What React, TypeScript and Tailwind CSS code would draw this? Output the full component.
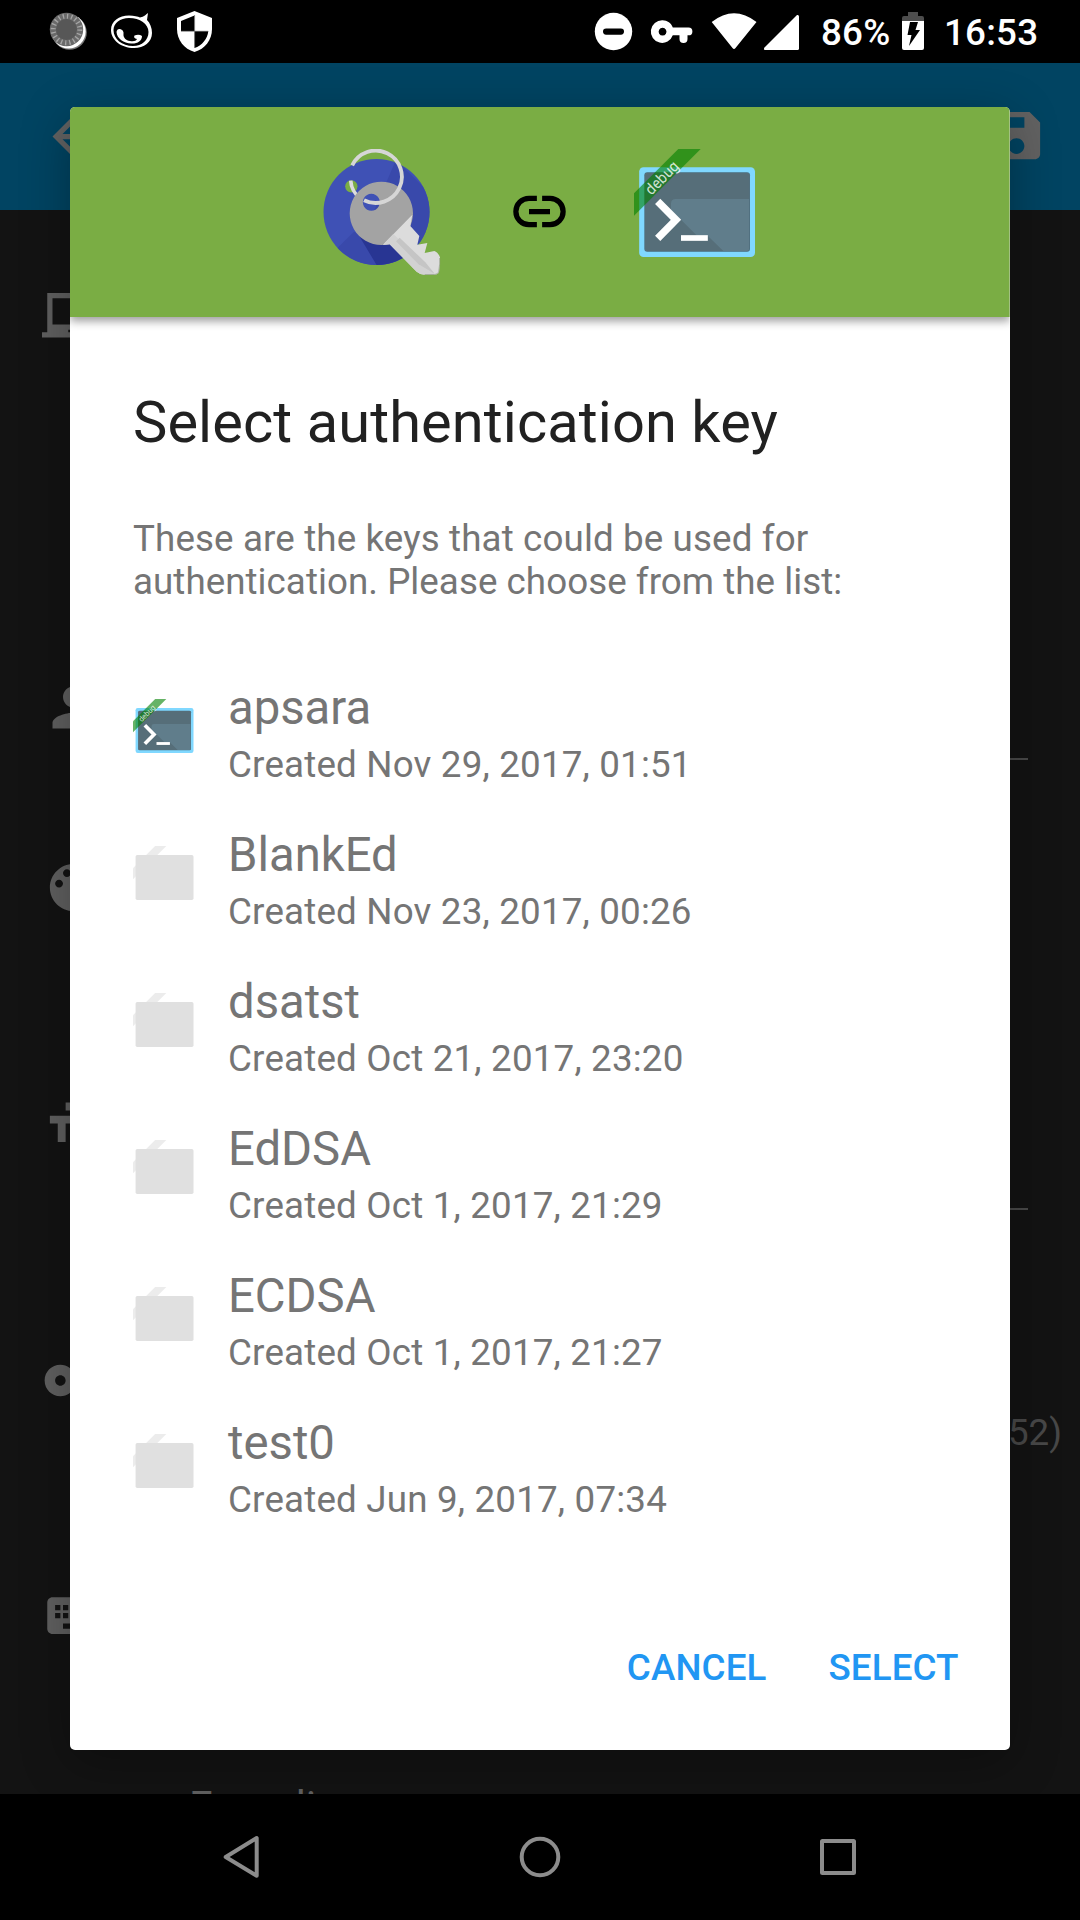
import React from "react";

type Entry = { name: string; created: string; active?: boolean };

const entries: Entry[] = [
  { name: "apsara", created: "Created Nov 29, 2017, 01:51", active: true },
  { name: "BlankEd", created: "Created Nov 23, 2017, 00:26" },
  { name: "dsatst", created: "Created Oct 21, 2017, 23:20" },
  { name: "EdDSA", created: "Created Oct 1, 2017, 21:29" },
  { name: "ECDSA", created: "Created Oct 1, 2017, 21:27" },
  { name: "test0", created: "Created Jun 9, 2017, 07:34" },
];

function Glyph({ d, className = "" }: { d: string; className?: string }) {
  return (
    <svg viewBox="0 0 24 24" className={`block h-[63px] w-[63px] shrink-0 fill-current ${className}`}>
      <path d={d} fillRule="evenodd" />
    </svg>
  );
}

function TerminalIcon({ className = "" }: { className?: string }) {
  return (
    <svg viewBox="102 57 378 378" className={`block shrink-0 ${className}`}>
      <rect x="117.500" y="111.500" width="347.500" height="269.500" rx="13" fill="#80d8ff" />
      <rect x="133" y="127" width="317" height="238" rx="9" fill="#4a6b7c" />
      <rect x="135" y="129" width="313" height="234" rx="7" fill="#607d8b" />
      <path d="M142 129H441Q448 129 448 136V207H227Q213 207 213 221V240L243 269L291 317H323L370 363H142Q135 363 135 356V136Q135 129 142 129Z" fill="#566e79" />
      <path d="M173 214L228 269.500L173 325" fill="none" stroke="#fff" strokeWidth="22" />
      <rect x="243" y="315.500" width="80.500" height="17" fill="#fff" />
      <path d="M235 57H302L102 257V190Z" fill="#008000" fillOpacity=".6" />
      <text
        x="0"
        y="0"
        transform="translate(154 197) rotate(-45)"
        fontFamily="Roboto, sans-serif"
        fontSize="46"
        textLength="121"
        lengthAdjust="spacingAndGlyphs"
        fill="#fff"
        fillOpacity=".8"
      >
        debug
      </text>
    </svg>
  );
}

function BlankIcon({ className = "" }: { className?: string }) {
  return (
    <svg viewBox="102 57 378 378" className={`block shrink-0 ${className}`}>
      <path d="M235 57H302L102 257V190Z" fill="#ececec" />
      <rect x="117.500" y="111.500" width="347.500" height="269.500" rx="10" fill="#e0e0e0" />
    </svg>
  );
}

function KeychainIcon() {
  return (
    <svg viewBox="60 57 378 378" className="block h-[126px] w-[126px] shrink-0">
      <defs>
        <clipPath id="disc">
          <circle cx="229.500" cy="246" r="159" />
        </clipPath>
      </defs>
      <g clipPath="url(#disc)">
        <rect x="60" y="80" width="340" height="340" fill="#3f51b5" />
        <path d="M288 90L400 200V420H230L186 330L240 200Z" fill="#3949ab" />
        <path d="M110 356L162 305L240 340V420H150Z" fill="#3949ab" />
        <path d="M180 322L231 407L330 400L270 320Z" fill="#283593" />
      </g>
      <circle cx="154" cy="169" r="18.500" fill="#7aad44" />
      <path d="M152 152C154 180 166 193 180 205" fill="none" stroke="#dcdcdc" strokeWidth="11" />
      <path fillRule="evenodd" d="M244 155a95 95 0 1 0 .1 0ZM214 191.500a25.500 25.500 0 1 1-.1 0Z" fill="#a3a3a3" />
      <path d="M337 254L331 288L358 318L352 344L382 339L374 369L403 363Q414 366 420 382V402L417 426Q414 434 404 434H374Q360 434 350 425L269 343L249 344Z" fill="#dcdcdc" />
      <path d="M280 312L404 431Q412 434 374 434Q360 434 350 425L269 343L249 344Z" fill="#d2d2d2" />
      <path d="M288 334L299 323L376 397L404 431L356 403Z" fill="#c5c5c5" />
      <path d="M419 384V402L416 426Q413 433 404 433.500H374" fill="none" stroke="#8e9b80" strokeWidth="2" />
      <path d="M156.500 106A78.500 78.500 0 1 1 192 210.500" fill="none" stroke="#d6d6d6" strokeWidth="11.500" />
    </svg>
  );
}

function StatusBar() {
  return (
    <div className="flex h-[63px] bg-black text-white">
      <svg viewBox="0 0 240 63" className="h-[63px] w-[240px] shrink-0">
        <circle cx="69.500" cy="32.500" r="17.300" fill="#777" />
        <circle cx="68.700" cy="31.500" r="17" fill="#fff" />
        <circle cx="66.500" cy="29.500" r="16.700" fill="#6a6a6a" />
        <circle cx="66.500" cy="29.500" r="13.300" fill="none" stroke="#a5a5a5" strokeWidth="5" strokeDasharray="1.300 2.880" />
        <circle cx="66.500" cy="29.500" r="10.500" fill="#575757" />
        <path
          fillRule="evenodd"
          d="M129 15.500C134 15.500 138 16.500 140 17.500C144 17 146.500 14 148 13L147 20C150 23 152 28 152 33C152 42 144 48 134 48C121 48 111 40 111 30C111 21 119 15.500 129 15.500ZM129 18C120 18 113.500 23 113.500 30C113.500 39 122 46 133 46C142 46 148.500 40 148.500 32C148.500 24 140 18 129 18Z"
          fill="#fff"
        />
        <path d="M116.500 32Q117 28.500 120 29Q124 30 123.500 34C123 37.500 126 40.500 130 41C134 41.500 136 41 137 39Q133 38 134.500 35.500Q139 34 142 36C142 41 137 44 131 43.500C124 43 117 39 116.500 32Z" fill="#fff" />
        <path d="M194.500 11L212 18V29C212 40 205 49 194.500 52C184 49 177 40 177 29V18Z" fill="#fff" />
        <path d="M194.500 15.500V31H181V21ZM194.500 31H208.300C207.500 39 202 45.500 194.500 48Z" fill="#000" />
        <path d="M181 31.300H208M194.600 15V48" stroke="#777" strokeWidth=".8" />
      </svg>
      <svg viewBox="590 0 220 63" className="ml-[350px] h-[63px] w-[220px] shrink-0">
        <circle cx="613.500" cy="31.500" r="18.700" fill="#fff" />
        <rect x="603" y="28.500" width="21" height="6.200" rx="3.100" fill="#000" />
        <path
          fillRule="evenodd"
          d="M662.500 20.300C667.300 20.300 671.300 23.300 672.800 27.500H688.500A3.900 3.900 0 0 1 688.500 35.300H687.500V39A3.800 3.800 0 0 1 679.500 39V35.300H672.800A11.300 11.300 0 1 1 662.500 20.300ZM662.500 27.800A3.900 3.900 0 1 0 662.600 27.800Z"
          fill="#fff"
        />
        <path d="M711.700 22Q734 4.500 756.500 22L735.500 48Q734 50 732.500 48Z" fill="#fff" />
        <path d="M797 15Q799 14.500 799 16.500V48.500Q799 50 797.500 50H765Q763 49.500 764.500 47.500Z" fill="#fff" />
      </svg>
      <span className="ml-[11px] w-[70px] whitespace-nowrap pt-[5px] font-['Roboto',sans-serif] text-[36.75px] font-medium leading-[55px] tracking-[0.2px]">86%</span>
      <svg viewBox="902 0 22 63" className="ml-[11px] h-[63px] w-[22px] shrink-0">
        <path d="M908 12H918V16H922Q924 16 924 18V21H902V18Q902 16 904 16H908Z" fill="#4d4d4d" />
        <path d="M902 21H924V48Q924 50 922 50H904Q902 50 902 48Z" fill="#fff" />
        <path d="M910 22H918L915.500 30H920L909 46L911.500 35H907.500Z" fill="#000" />
      </svg>
      <span className="ml-[20px] whitespace-nowrap pt-[5px] font-['Roboto',sans-serif] text-[36.75px] font-medium leading-[55px] tracking-[0.2px]">16:53</span>
    </div>
  );
}

function EditorScreen() {
  return (
    <>
      <div className="flex h-[147px] items-start justify-between bg-[#014462] pl-[42px] pr-[32px] pt-[41px] text-[#626262]">
        <Glyph className="mt-[1px]" d="M20 11H7.830l5.590-5.590L12 4l-8 8 8 8 1.410-1.410L7.830 13H20v-2z" />
        <Glyph d="M17 3H5c-1.110 0-2 .9-2 2v14c0 1.100.89 2 2 2h14c1.100 0 2-.9 2-2V7l-4-4zm-5 16c-1.660 0-3-1.340-3-3s1.340-3 3-3 3 1.340 3 3-1.340 3-3 3zm3-10H5V5h10v4z" />
      </div>
      <div className="flex h-[1584px] overflow-hidden bg-[#131313] pl-[42px] text-[#606060]">
        <div className="w-[63px] shrink-0 pt-[75px]">
          <Glyph d="M22 18V3H2v15H0v2h24v-2h-2zm-8 0h-4v-1h4v1zm6-3H4V5h16v10z" />
          <Glyph className="mt-[328px]" d="M12 12c2.210 0 4-1.790 4-4s-1.790-4-4-4-4 1.790-4 4 1.790 4 4 4zm0 2c-2.670 0-8 1.340-8 4v2h16v-2c0-2.660-5.330-4-8-4z" />
          <Glyph
            className="mt-[117px]"
            d="M12 3c-4.970 0-9 4.030-9 9s4.030 9 9 9c.83 0 1.500-.67 1.500-1.500 0-.39-.15-.74-.39-1.010-.23-.26-.38-.61-.38-.99 0-.83.67-1.500 1.500-1.500H16c2.760 0 5-2.240 5-5 0-4.420-4.030-8-9-8zm-5.500 9c-.83 0-1.500-.67-1.500-1.500S5.670 9 6.500 9 8 9.670 8 10.500 7.330 12 6.500 12zm3-4C8.670 8 8 7.330 8 6.500S8.670 5 9.500 5s1.500.67 1.500 1.500S10.330 8 9.500 8z"
          />
          <Glyph className="mt-[173px]" d="M9 4v3h5v12h3V7h5V4H9zm-6 8h3v7h3v-7h3V9H3v3z" />
          <Glyph className="mt-[194px]" d="M12.650 10C11.830 7.670 9.610 6 7 6c-3.310 0-6 2.690-6 6s2.690 6 6 6c2.610 0 4.830-1.670 5.650-4H17v4h4v-4h2v-4H12.650zM7 14c-1.100 0-2-.9-2-2s.9-2 2-2 2 .9 2 2-.9 2-2 2z" />
          <Glyph
            className="mt-[172px]"
            d="M20 5H4c-1.100 0-1.990.9-1.990 2L2 17c0 1.100.9 2 2 2h16c1.100 0 2-.9 2-2V7c0-1.100-.9-2-2-2zm-9 3h2v2h-2V8zm0 3h2v2h-2v-2zM8 8h2v2H8V8zm0 3h2v2H8v-2zm-1 2H5v-2h2v2zm0-3H5V8h2v2zm9 7H8v-2h8v2z"
          />
        </div>
        <div className="ml-[84px] flex w-[873px] flex-col font-['Roboto',sans-serif]">
          <div className="mr-[34px] mt-[548px] h-[2px] shrink-0 bg-[#494949]" />
          <div className="mr-[34px] mt-[448px] h-[2px] shrink-0 bg-[#494949]" />
          <div className="mt-[201px] shrink-0 self-end text-[36.75px] leading-[43px] text-[#484848]">52)</div>
          <div className="mt-[328px] shrink-0 text-[42px] leading-[50px]">Encoding</div>
        </div>
      </div>
    </>
  );
}

function NavBar() {
  return (
    <div className="flex h-[126px] bg-black">
      <svg viewBox="0 0 1080 126" className="h-[126px] w-[1080px]" fill="none" stroke="#8c8c8c" strokeWidth="4" strokeLinejoin="round">
        <path d="M225.700 63L256.700 44V81.700Z" />
        <circle cx="540" cy="63" r="18.300" />
        <rect x="822" y="47" width="32" height="32" rx=".5" />
      </svg>
    </div>
  );
}

export default function App() {
  return (
    <div className="relative h-[1920px] w-[1080px] overflow-hidden bg-black">
      <StatusBar />
      <EditorScreen />
      <NavBar />
      <div className="absolute left-[70px] top-[107px] flex h-[1643px] w-[939.6px] flex-col overflow-visible rounded-[5px] bg-white font-['Roboto',sans-serif] text-[#757575] shadow-[0_12px_50px_rgba(0,0,0,0.3)]">
        <div className="flex h-[210px] shrink-0 items-center justify-center gap-[62.5px] rounded-t-[5px] bg-[#7aad44] shadow-[0_4px_10px_rgba(0,0,0,0.4)] [clip-path:inset(0_0_-20px_0)]">
          <KeychainIcon />
          <svg viewBox="0 0 24 24" className="mb-[2px] block h-[63px] w-[63px] shrink-0" fill="none" stroke="#000" strokeWidth="2">
            <path d="M11 7H8a5 5 0 0 0 0 10h3M13 7h3a5 5 0 0 1 0 10h-3M8 12h8" />
          </svg>
          <TerminalIcon className="h-[126px] w-[126px]" />
        </div>
        <h1 className="mt-[71px] px-[63px] text-[57.75px] font-normal leading-[68px] tracking-[0.1px] text-[#212121]">Select authentication key</h1>
        <p className="mt-[61px] whitespace-nowrap px-[63px] text-[36.75px] leading-[43px]">
          <span className="block tracking-[0.12px]">These are the keys that could be used for</span>
          <span className="block tracking-[0.04px]">authentication. Please choose from the list:</span>
        </p>
        <ul className="mt-[77px] flex flex-col px-[63px]">
          {entries.map((e) => (
            <li key={e.name} className="flex h-[147px] items-start">
              {e.active ? <TerminalIcon className="mt-[19px] h-[63px] w-[63px]" /> : <BlankIcon className="mt-[19px] h-[63px] w-[63px]" />}
              <div className="ml-[32px] flex flex-col gap-[7px] whitespace-nowrap">
                <span className="text-[47.25px] leading-[56px]">{e.name}</span>
                <span className="text-[36.75px] leading-[43px] tracking-[0.18px]">{e.created}</span>
              </div>
            </li>
          ))}
        </ul>
        <div className="mt-[84px] flex justify-end gap-[62px] pr-[51px] text-[36.75px] font-medium leading-[43px] tracking-[0.1px] text-[#2196f3]">
          <button>CANCEL</button>
          <button>SELECT</button>
        </div>
      </div>
    </div>
  );
}
